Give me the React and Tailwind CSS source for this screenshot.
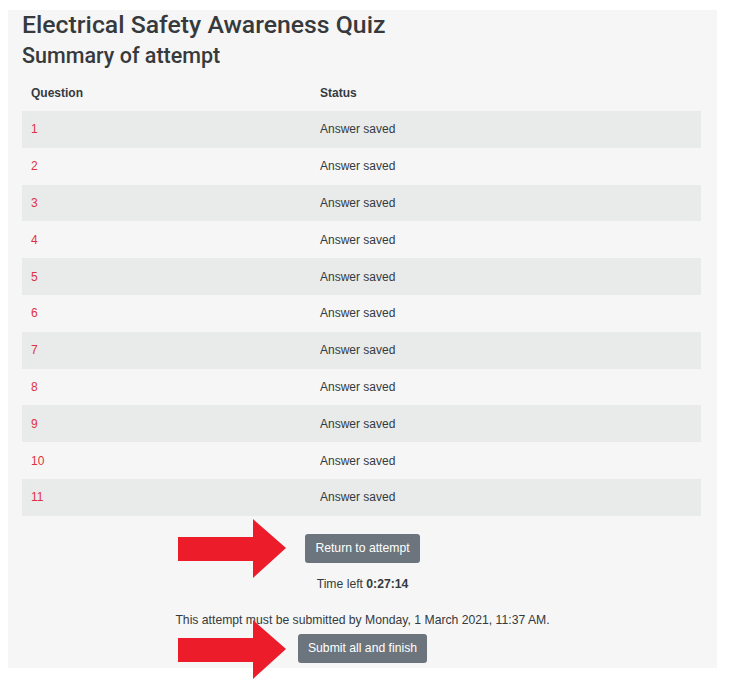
import { useState } from 'react';

const rows = Array.from({ length: 11 }, (_, i) => ({ num: i + 1, status: 'Answer saved' }));

function Arrow({ className }) {
  return (
    <svg className={className} width="110" height="60" viewBox="0 0 110 60">
      <polygon points="0,18 75,18 75,0 108,29 75,59 75,42 0,42" fill="#ec1c2a" />
    </svg>
  );
}

export default function App() {
  const [rowsState] = useState(rows);

  return (
    <div className="min-h-[683px] bg-white pt-[10px] pl-2 font-['Liberation_Sans',Arial,sans-serif] text-[#343a40]">
      <div className="relative w-[709px] h-[658px] bg-[#f6f6f6] px-[14px]">
        <h1 className="font-['Roboto',sans-serif] font-medium text-[24.8px] leading-[30px] text-[#373a3c]">
          Electrical Safety Awareness Quiz
        </h1>
        <h2 className="font-['Roboto',sans-serif] font-medium text-[21.5px] leading-[26px] mt-[3px] text-[#373a3c]">
          Summary of attempt
        </h2>

        {/* Table */}
        <table className="mt-[6px] w-[679px] text-[12px] border-collapse">
          <thead>
            <tr className="h-[36px]">
              <th className="text-left font-bold pl-[9px] w-[298px]">Question</th>
              <th className="text-left font-bold">Status</th>
            </tr>
          </thead>
          <tbody>
            {rowsState.map((row, i) => (
              <tr key={row.num} className={`h-[36.8px] ${i % 2 === 0 ? 'bg-[#e9eaea]' : ''}`}>
                <td className="pl-[9px] text-[#e0313f]">{row.num}</td>
                <td className="text-[#343a40]">{row.status}</td>
              </tr>
            ))}
          </tbody>
        </table>

        {/* Actions */}
        <div className="flex flex-col items-center text-[12.2px] leading-[18px]">
          <button className="mt-[18px] h-[29px] px-[10px] rounded-[3px] bg-[#6c757d] text-white text-[12.2px]">
            Return to attempt
          </button>
          <div className="mt-[12px]">
            Time left <span className="font-bold">0:27:14</span>
          </div>
          <div className="mt-[18px]">This attempt must be submitted by Monday, 1 March 2021, 11:37 AM.</div>
          <button className="mt-[5px] h-[29px] px-[10px] rounded-[3px] bg-[#6c757d] text-white text-[12.2px]">
            Submit all and finish
          </button>
        </div>

        {/* Annotation arrows */}
        <Arrow className="absolute left-[170px] top-[509px]" />
        <Arrow className="absolute left-[170px] top-[610px]" />
      </div>
    </div>
  );
}
